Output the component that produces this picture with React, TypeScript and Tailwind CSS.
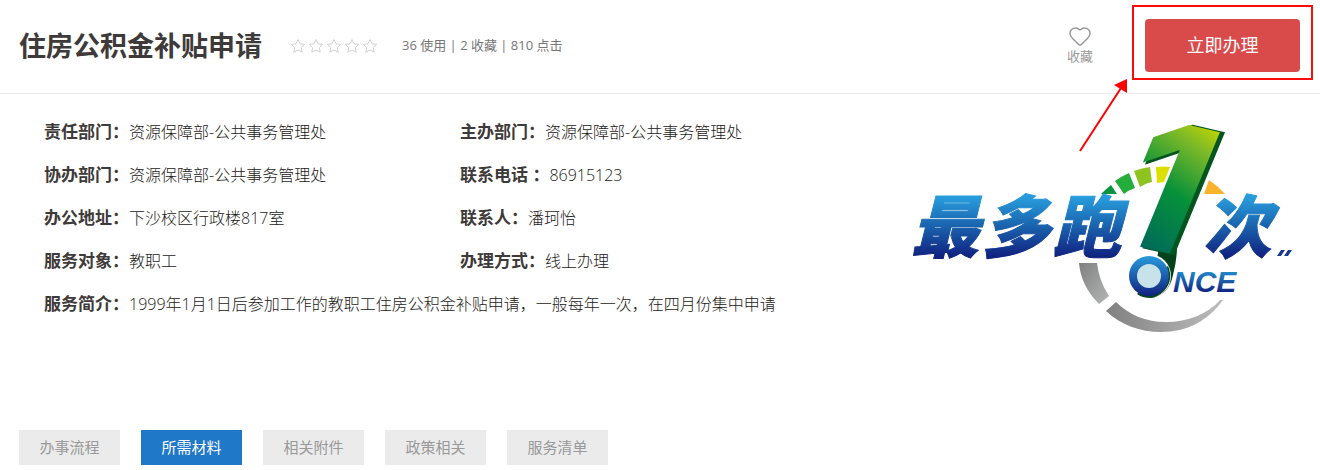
import clsx from "clsx";
import { Heart } from "lucide-react";

const details = [
  [
    { label: "责任部门：", value: "资源保障部-公共事务管理处" },
    { label: "主办部门：", value: "资源保障部-公共事务管理处" },
  ],
  [
    { label: "协办部门：", value: "资源保障部-公共事务管理处" },
    { label: "联系电话 ：", value: "86915123" },
  ],
  [
    { label: "办公地址：", value: "下沙校区行政楼817室" },
    { label: "联系人：", value: "潘珂怡" },
  ],
  [
    { label: "服务对象：", value: "教职工" },
    { label: "办理方式：", value: "线上办理" },
  ],
  [
    {
      label: "服务简介：",
      value:
        "1999年1月1日后参加工作的教职工住房公积金补贴申请，一般每年一次，在四月份集中申请",
    },
  ],
];

const tabs = ["办事流程", "所需材料", "相关附件", "政策相关", "服务清单"];

function Star() {
  return (
    <svg width="16" height="16" viewBox="0 0 16 16" fill="none" stroke="#d2d2d2">
      <path d="M8 1.6l2 4.2 4.7.6-3.4 3.2.9 4.6L8 12l-4.2 2.2.9-4.6L1.3 6.4 6 5.8z" />
    </svg>
  );
}

function Logo() {
  return (
    <svg
      viewBox="0 0 390 216"
      className="w-[390px] shrink-0 overflow-visible"
      role="img"
      aria-label="最多跑1次"
    >
      <defs>
        <linearGradient id="blue" gradientUnits="userSpaceOnUse" x1="0" y1="78" x2="0" y2="137">
          <stop offset="0" stopColor="#279bdb" />
          <stop offset="0.45" stopColor="#1b66b0" />
          <stop offset="1" stopColor="#10217f" />
        </linearGradient>
        <linearGradient id="once" gradientUnits="userSpaceOnUse" x1="0" y1="136" x2="0" y2="176">
          <stop offset="0" stopColor="#279bdb" />
          <stop offset="1" stopColor="#10217f" />
        </linearGradient>
        <linearGradient id="nce" gradientUnits="userSpaceOnUse" x1="0" y1="152" x2="0" y2="173">
          <stop offset="0" stopColor="#2387c8" />
          <stop offset="1" stopColor="#10217f" />
        </linearGradient>
        <linearGradient id="green" gradientUnits="userSpaceOnUse" x1="300" y1="2" x2="245" y2="132">
          <stop offset="0" stopColor="#c3d600" />
          <stop offset="0.2" stopColor="#7cb928" />
          <stop offset="0.55" stopColor="#079139" />
          <stop offset="1" stopColor="#006a5a" />
        </linearGradient>
        <linearGradient id="greyLeft" x1="0" y1="0" x2="1" y2="1">
          <stop offset="0" stopColor="#808080" />
          <stop offset="1" stopColor="#b4b6b6" />
        </linearGradient>
        <linearGradient id="greyBottom" x1="0" y1="0" x2="1" y2="0">
          <stop offset="0" stopColor="#808080" />
          <stop offset="1" stopColor="#bdbdbd" />
        </linearGradient>
      </defs>

      {/* dial */}
      <path d="M196 74q5-5 10-9l6 9z" fill="#0b9440" />
      <path d="M210 61q7-5 14-8l6 15q-6 2-11 6z" fill="#24ad3a" />
      <path d="M229 51q8-3 16-4l2 15q-6 1-12 5z" fill="#8fc320" />
      <path d="M251 47q7-1 14 0l-6 15-7 1z" fill="#dce000" />
      <path d="M304 60q9 6 16 14h-21z" fill="#f9b42d" />
      <path d="M174 143h18q2 18 12 33l-10 8q-18-18-20-41z" fill="url(#greyLeft)" />
      <path
        d="M211 182c13 13 30 20 50 20 22 0 42-8 54-22h3c-15 21-36 32-62 32-21 0-40-7-55-21z"
        fill="url(#greyBottom)"
      />

      <g
        fill="url(#blue)"
        stroke="url(#blue)"
        fontFamily="'Noto Sans CJK SC', sans-serif"
        fontSize="68"
        fontStyle="italic"
        fontWeight="900"
      >
        <text x="6" y="132">最</text>
        <text x="77" y="132">多</text>
        <text x="148" y="132">跑</text>
        <text x="298" y="132">次</text>
      </g>
      <path d="M376 130h4l-4 6h-4zM383 130h4l-4 6h-4z" fill="#1a3a90" />

      {/* the big numeral with its shadow */}
      <path d="M254 126h18q0 14-4 29-4 20-22 23z" fill="#04421c" />
      <g
        fontFamily="Inter, sans-serif"
        fontSize="178"
        fontStyle="italic"
        fontWeight="800"
        transform="rotate(13 240 137)"
      >
        <text x="207" y="128" fill="#04551f" stroke="#04551f" strokeWidth="2">1</text>
        <text x="203" y="128" fill="url(#green)">1</text>
      </g>

      <circle cx="244" cy="156" r="22" fill="#fff" />
      <path d="M263 146q6 14-4 25-6 6-13 7-9 0-14-4z" fill="#04421c" />
      <circle cx="244" cy="156" r="20" fill="url(#once)" />
      <circle cx="244" cy="156" r="12" fill="#c8e2ea" />
      <text
        x="268"
        y="172"
        fill="url(#nce)"
        fontFamily="'Liberation Sans', sans-serif"
        fontSize="30"
        fontStyle="italic"
        fontWeight="700"
      >
        NCE
      </text>
    </svg>
  );
}

export default function App() {
  return (
    <main className="bg-white font-['Open_Sans','Noto_Sans_CJK_SC',sans-serif] text-[#3e3a39]">
      <header className="flex h-[94px] items-center border-b border-[#ececec] pr-5 pb-[2px] pl-[19px]">
        <h1 className="pt-[2px] text-[27px] font-bold">住房公积金补贴申请</h1>
        <div className="ml-7 flex gap-[2px]">
          {tabs.map((tab) => (
            <Star key={tab} />
          ))}
        </div>
        <p className="ml-6 text-[13px] text-[#777]">36 使用 | 2 收藏 | 810 点击</p>
        <button className="ml-auto flex flex-col items-center pb-1 text-[13px] leading-4 text-[#999]">
          <Heart size={24} strokeWidth={1.5} />
          收藏
        </button>
        <div className="relative ml-[52px]">
          <button className="h-[53px] w-[155px] rounded bg-[#d94b4b] pb-[2px] text-lg text-white">
            立即办理
          </button>
          <div className="pointer-events-none absolute -inset-x-[13px] -top-[14px] -bottom-2 border-2 border-[#ff0a0a]" />
          <svg
            className="pointer-events-none absolute top-[60px] -left-[66px]"
            width="50"
            height="74"
            viewBox="0 0 50 74"
          >
            <path d="M1 72L42 9" stroke="#f00" strokeWidth="2" />
            <path d="M48 0v14L35 6z" fill="#f00" />
          </svg>
        </div>
      </header>

      <section className="flex items-start justify-between pr-[25px] pl-11">
        <dl className="flex flex-col pt-4">
          {details.map((row) => (
            <div key={row[0].label} className="flex h-[43px] items-center">
              {row.map((item) => (
                <div
                  key={item.label}
                  className={clsx("flex items-baseline", row.length > 1 && "w-[416px]")}
                >
                  <dt className="text-[17px] font-bold whitespace-pre">{item.label}</dt>
                  <dd className="text-base font-light whitespace-nowrap text-[#1c1918]">
                    {item.value}
                  </dd>
                </div>
              ))}
            </div>
          ))}
        </dl>
        <div className="pt-[26px]">
          <Logo />
        </div>
      </section>

      <nav className="flex gap-[21px] px-[19px] pt-[94px]">
        {tabs.map((tab) => (
          <button
            key={tab}
            className={clsx(
              "h-[35px] w-[101px] text-[15px]",
              tab === "所需材料" ? "bg-[#1f78c8] text-white" : "bg-[#ebebeb] text-[#999]"
            )}
          >
            {tab}
          </button>
        ))}
      </nav>
    </main>
  );
}
